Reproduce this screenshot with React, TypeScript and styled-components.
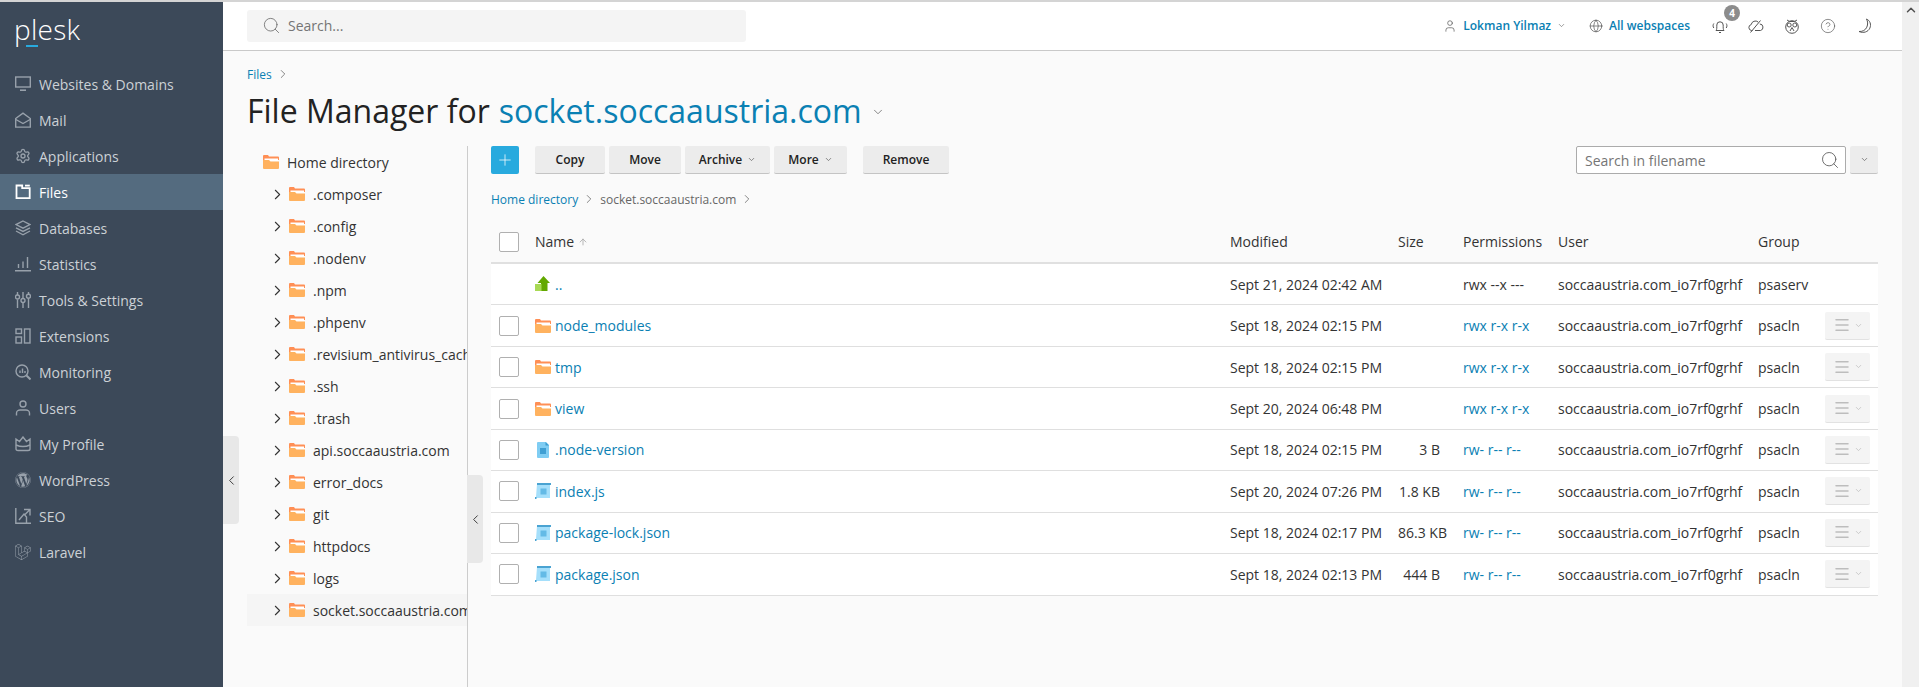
import * as React from 'react';
import styled, { createGlobalStyle } from 'styled-components';
import {
    ArrowUp, ChevronDown, ChevronLeft, ChevronRight, ChevronUp, CircleHelp, Globe, Menu,
    Plus, Search, Settings, User
} from 'lucide-react';
import { FaWordpress } from 'react-icons/fa';
import { SiLaravel } from 'react-icons/si';

const LINK = '#0a80b3';
const TEXT = '#222222';

const GlobalStyle = createGlobalStyle`
    html, body { margin: 0; padding: 0; height: 100%; overflow: hidden; }
    body { font-family: "Open Sans", "Noto Sans", sans-serif; font-size: 14px; color: ${TEXT}; }
    * { box-sizing: border-box; }
`;

const ICON_PROPS = { width: 16, height: 16, viewBox: '0 0 16 16', fill: 'none', stroke: 'currentColor', strokeWidth: 1.4 };

const navItems: { label: string; icon: React.ReactNode; active?: boolean }[] = [
    { label: 'Websites & Domains', icon: <svg {...ICON_PROPS}><rect x="0.7" y="1" width="14.6" height="10" /><path d="M5 14.2h6" strokeWidth="1.6" /></svg> },
    { label: 'Mail', icon: <svg {...ICON_PROPS}><path d="M.7 6.5 8 1.2l7.3 5.3v8.6H.7z" /><path d="m.9 7.5 7.1 4 7.1-4" /></svg> },
    { label: 'Applications', icon: <Settings size={16} strokeWidth={2} /> },
    { label: 'Files', active: true, icon: <svg {...ICON_PROPS} strokeWidth={1.8}><path d="M1.5 1.5v12.6h13.2V4.2H7.2V1.5z" /><path d="M10 1.6h4.8" /></svg> },
    { label: 'Databases', icon: <svg {...ICON_PROPS}><path d="M8 1 15 4.6 8 8.2 1 4.6z" /><path d="m1 7.8 7 3.6 7-3.6M1 11l7 3.8 7-3.8" /></svg> },
    { label: 'Statistics', icon: <svg {...ICON_PROPS}><path d="M0 14.8h16M3.5 12V8M8 12V5.5M12.5 12V1" /></svg> },
    { label: 'Tools & Settings', icon: <svg {...ICON_PROPS}><path d="M2.5 0v3M2.5 7.5V16M8 0v6M8 11v5M13.5 0v2M13.5 6.5V16" /><circle cx="2.5" cy="5" r="2" /><circle cx="8" cy="8.5" r="2" /><circle cx="13.5" cy="4.2" r="2" /></svg> },
    { label: 'Extensions', icon: <svg {...ICON_PROPS}><rect x="1" y="1" width="5.5" height="4.5" /><rect x="1" y="9" width="5.5" height="6" /><rect x="9.5" y="1" width="5.5" height="14" /></svg> },
    { label: 'Monitoring', icon: <svg {...ICON_PROPS}><circle cx="7" cy="7" r="6" /><path d="m11.5 11.5 4 4" strokeWidth="2" /><path d="M5 9V6.5M7.5 9V4.5M10 9V7" /></svg> },
    { label: 'Users', icon: <svg {...ICON_PROPS}><circle cx="8" cy="4" r="3" /><path d="M1.5 15.5V13c0-2 2-3 3.5-3h6c1.5 0 3.500 1 3.500 3v2.500" /></svg> },
    { label: 'My Profile', icon: <svg {...ICON_PROPS}><path d="m1 3 3.500 2.500L8 1l3.500 4.500L15 3v10c0 1-1 1.500-2 1.500H3c-1 0-2-.5-2-1.500z" /><path d="M1 9c4 1.800 10 1.800 14 0" /></svg> },
    { label: 'WordPress', icon: <FaWordpress size={16} /> },
    { label: 'SEO', icon: <svg {...ICON_PROPS}><path d="M.8 0v15.200H16" /><path d="m4 12 5-6 2.500 3V15M9 1.500h6v6M15 1.500 9.500 7" /></svg> },
    { label: 'Laravel', icon: <SiLaravel size={16} /> }
];

const treeItems = [
    '.composer', '.config', '.nodenv', '.npm', '.phpenv', '.revisium_antivirus_cache', '.ssh', '.trash',
    'api.soccaaustria.com', 'error_docs', 'git', 'httpdocs', 'logs', 'socket.soccaaustria.com'
];

type FileKind = 'up' | 'folder' | 'file' | 'script';

interface FileRow {
    name: string;
    kind: FileKind;
    modified: string;
    size?: string;
    permissions: string;
}

const fileRows: FileRow[] = [
    { name: '..', kind: 'up', modified: 'Sept 21, 2024 02:42 AM', permissions: 'rwx --x ---' },
    { name: 'node_modules', kind: 'folder', modified: 'Sept 18, 2024 02:15 PM', permissions: 'rwx r-x r-x' },
    { name: 'tmp', kind: 'folder', modified: 'Sept 18, 2024 02:15 PM', permissions: 'rwx r-x r-x' },
    { name: 'view', kind: 'folder', modified: 'Sept 20, 2024 06:48 PM', permissions: 'rwx r-x r-x' },
    { name: '.node-version', kind: 'file', modified: 'Sept 18, 2024 02:15 PM', size: '3 B', permissions: 'rw- r-- r--' },
    { name: 'index.js', kind: 'script', modified: 'Sept 20, 2024 07:26 PM', size: '1.8 KB', permissions: 'rw- r-- r--' },
    { name: 'package-lock.json', kind: 'script', modified: 'Sept 18, 2024 02:17 PM', size: '86.3 KB', permissions: 'rw- r-- r--' },
    { name: 'package.json', kind: 'script', modified: 'Sept 18, 2024 02:13 PM', size: '444 B', permissions: 'rw- r-- r--' }
];

const FolderIcon = () => (
    <svg width="16" height="14" viewBox="0 0 16 14">
        <path d="M0 1a1 1 0 0 1 1-1h4l1 1.500h9a1 1 0 0 1 1 1V5H0z" fill="#ff8f55" />
        <path d="M1.500 3.500H15V6H1.500z" fill="#fff" />
        <path d="M0 5h6l1.500 1.500H16V13a1 1 0 0 1-1 1H1a1 1 0 0 1-1-1z" fill="#ffb25f" />
    </svg>
);

const KindIcon = ({ kind }: { kind: FileKind }) => {
    if (kind === 'folder') return <FolderIcon />;
    if (kind === 'up') {
        return (
            <svg width="16" height="16" viewBox="0 0 16 16">
                <path d="M8.500 0 15 7h-2.500v8H6V7H2.500z" fill="#62a800" />
                <path d="M0 8h6.500v7H0z" fill="#a8d955" />
            </svg>
        );
    }
    if (kind === 'file') {
        return (
            <svg width="16" height="16" viewBox="0 0 16 16">
                <path d="M3 0h8l3 3v12a1 1 0 0 1-1 1H3a1 1 0 0 1-1-1V1a1 1 0 0 1 1-1z" fill="#7fcdf3" />
                <path d="M10.500 0 14 3.500h-3.500z" fill="#3d9dd0" />
                <rect x="5" y="6" width="6" height="6" fill="#3f9fd3" />
            </svg>
        );
    }
    return (
        <svg width="16" height="16" viewBox="0 0 16 16">
            <path d="M2 1h13v14H0v-1h1z" fill="#a5dffb" />
            <rect x="2" y="0" width="14" height="2" fill="#4aa3d2" />
            <rect x="0" y="14" width="1.500" height="2" fill="#4aa3d2" />
            <rect x="5.500" y="5.500" width="6" height="6" fill="#64bae6" />
        </svg>
    );
};

const Page = styled.div`
    display: flex;
    height: 100vh;
    border-top: 2px solid #d4d4d4;
    overflow: hidden;
`;

const Sidebar = styled.nav`
    flex: 0 0 223px;
    background: #3c4959;
`;

const LogoRow = styled.div`
    height: 64px;
    padding: 10px 0 0 14px;
`;

const Logo = styled.span`
    position: relative;
    display: inline-block;
    font-size: 28px;
    line-height: 34px;
    font-weight: 300;
    letter-spacing: 0.3px;
    color: #ffffff;

    &::after {
        content: '';
        position: absolute;
        left: 12px;
        top: 33px;
        width: 12px;
        height: 2px;
        background: #28aade;
    }
`;

const NavItem = styled.a<{ $active?: boolean }>`
    display: flex;
    align-items: center;
    gap: 8px;
    height: 36px;
    padding-left: 15px;
    font-size: 14px;
    background: ${(props) => (props.$active ? '#546b7f' : 'transparent')};
    color: ${(props) => (props.$active ? '#ffffff' : '#ccd1d6')};

    svg {
        flex: none;
        color: ${(props) => (props.$active ? '#ffffff' : '#98a1ab')};
    }
`;

const Main = styled.div`
    position: relative;
    flex: 1;
    min-width: 0;
    display: flex;
    flex-direction: column;
    background: #fafafa;
`;

const Header = styled.header`
    flex: 0 0 49px;
    display: flex;
    align-items: center;
    padding: 0 29px 1px 24px;
    background: #ffffff;
    border-bottom: 1px solid #c9c9c9;
`;

const GlobalSearch = styled.div`
    display: flex;
    align-items: center;
    gap: 7px;
    width: 499px;
    height: 32px;
    padding-left: 15px;
    border-radius: 3px;
    background: #f4f4f4;
    color: #757575;

    svg {
        color: #666;
    }
`;

const HeaderRight = styled.div`
    margin-left: auto;
    display: flex;
    align-items: center;
    height: 100%;
`;

const HeaderLink = styled.a<{ $gap: number }>`
    display: flex;
    align-items: center;
    gap: 6px;
    margin-right: ${(props) => props.$gap}px;
    font-size: 12px;
    font-weight: 600;
    color: ${LINK};

    svg {
        color: #555;
    }
`;

const HeaderIcon = styled.span<{ $gap: number }>`
    position: relative;
    display: flex;
    margin-right: ${(props) => props.$gap}px;
    color: #555;
`;

const Badge = styled.span`
    position: absolute;
    left: 12px;
    top: -13px;
    width: 16px;
    height: 16px;
    border-radius: 50%;
    background: #8c8c8c;
    color: #fff;
    font-size: 10px;
    font-weight: 700;
    line-height: 16px;
    text-align: center;
`;

const Content = styled.main`
    flex: 1;
    min-height: 0;
    display: flex;
    flex-direction: column;
    padding-left: 24px;
`;

const Crumbs = styled.div`
    display: flex;
    align-items: center;
    gap: 4px;
    height: 18px;
    margin-top: 14px;
    font-size: 12px;
    color: ${LINK};

    svg {
        color: #555;
    }
`;

const Title = styled.h1`
    display: flex;
    align-items: center;
    height: 44px;
    margin: 5px 0 14px;
    font-size: 32px;
    font-weight: 400;
    white-space: nowrap;
    color: ${TEXT};

    a {
        color: ${LINK};
        margin-left: 9px;
    }

    svg {
        margin: 4px 0 0 9px;
        color: #555;
    }
`;

const Split = styled.div`
    flex: 1;
    min-height: 0;
    display: flex;
`;

const Tree = styled.aside`
    position: relative;
    flex: 0 0 221px;
    min-width: 0;
    border-right: 1px solid #cccccc;
`;

const TreeRow = styled.div<{ $root?: boolean; $selected?: boolean }>`
    display: flex;
    align-items: center;
    height: 32px;
    padding-left: ${(props) => (props.$root ? '16px' : '22px')};
    background: ${(props) => (props.$selected ? '#f5f5f5' : 'transparent')};
    white-space: nowrap;
    overflow: hidden;
    color: #333;

    > svg:first-child {
        flex: none;
        color: #333;
    }
`;

const TreeFolder = styled.span<{ $root?: boolean }>`
    flex: none;
    display: flex;
    margin: ${(props) => (props.$root ? '0 8px 0 0' : '0 8px 0 3px')};
`;

const CollapseHandle = styled.button<{ $top: number; $left: string }>`
    position: absolute;
    left: ${(props) => props.$left};
    top: ${(props) => props.$top}px;
    display: flex;
    align-items: center;
    justify-content: center;
    width: 16px;
    height: 88px;
    padding: 0;
    border: 0;
    border-radius: 0 4px 4px 0;
    background: #e8e8e8;
    color: #333;
`;

const Pane = styled.section`
    flex: 1;
    min-width: 0;
    padding: 0 24px 0 23px;
`;

const Toolbar = styled.div`
    display: flex;
    align-items: flex-start;
    height: 28px;
`;

const AddButton = styled.button`
    display: flex;
    align-items: center;
    justify-content: center;
    width: 28px;
    height: 28px;
    margin-right: 16px;
    padding: 0;
    border: 0;
    border-radius: 2px;
    background: #28aade;
    color: #fff;
`;

const ToolButton = styled.button<{ $width: number; $gap?: number }>`
    display: flex;
    align-items: center;
    justify-content: center;
    gap: 5px;
    width: ${(props) => props.$width}px;
    height: 28px;
    margin-right: ${(props) => props.$gap ?? 4}px;
    padding: 0;
    border: 0;
    border-bottom: 1px solid #c4c4c4;
    border-radius: 2px;
    background: #ececec;
    font-family: inherit;
    font-size: 12px;
    font-weight: 600;
    color: #222;

    svg {
        color: #666;
    }
`;

const FilterBox = styled.div`
    display: flex;
    align-items: center;
    justify-content: space-between;
    width: 270px;
    height: 28px;
    margin-left: auto;
    padding: 0 5px 0 8px;
    border: 1px solid #ababab;
    border-radius: 2px;
    background: #fff;
    color: #757575;

    svg {
        color: #555;
    }
`;

const FilterToggle = styled(ToolButton)`
    margin: 0 0 0 4px;
`;

const PathBar = styled.div`
    display: flex;
    align-items: center;
    gap: 4px;
    height: 18px;
    margin: 16px 0 13px;
    font-size: 12px;
    color: #666;

    a {
        color: ${LINK};
    }

    svg {
        color: #555;
    }
`;

const COLUMNS = '44px 695px 168px 65px 95px 200px 67px 53px';

const HeadRow = styled.div`
    display: grid;
    grid-template-columns: ${COLUMNS};
    align-items: center;
    height: 43px;
    border-bottom: 2px solid #e0e0e0;
    color: #333;
`;

const BodyRow = styled.div`
    display: grid;
    grid-template-columns: ${COLUMNS};
    align-items: center;
    height: 41.45px;
    background: #fff;
    border-bottom: 1px solid #dfdfdf;
    color: #333;
`;

const CheckCell = styled.span`
    padding-left: 8px;
    display: flex;
`;

const Checkbox = styled.span`
    width: 20px;
    height: 20px;
    border: 1px solid #b0b0b0;
    border-radius: 2px;
    background: #fff;
`;

const NameCell = styled.span`
    display: flex;
    align-items: center;
    gap: 4px;
    color: ${LINK};
`;

const NameIcon = styled.span`
    display: flex;
    justify-content: center;
    width: 16px;
`;

const HeadName = styled.span`
    display: flex;
    align-items: center;
    gap: 4px;

    svg {
        color: #a8a8a8;
    }
`;

const SizeCell = styled.span`
    padding-right: 23px;
    text-align: right;
    white-space: nowrap;
`;

const Perms = styled.span<{ $link: boolean }>`
    white-space: nowrap;
    color: ${(props) => (props.$link ? LINK : '#333')};
`;

const RowAction = styled.button`
    display: flex;
    align-items: center;
    justify-content: center;
    gap: 3px;
    width: 45px;
    height: 28px;
    padding: 0;
    border: 0;
    border-bottom: 1px solid #e2e2e2;
    border-radius: 2px;
    background: #f4f4f4;
    color: #bdbdbd;
`;

const ScrollTrack = styled.div`
    flex: 0 0 17px;
    display: flex;
    justify-content: center;
    padding-top: 1px;
    background: #f0f0f0;
    color: #505050;
`;

export default function App() {
    return (
        <React.Fragment>
            <GlobalStyle />
            <Page>
                <Sidebar>
                    <LogoRow><Logo>plesk</Logo></LogoRow>
                    {navItems.map((item) => (
                        <NavItem key={item.label} $active={item.active}>
                            {item.icon}
                            {item.label}
                        </NavItem>
                    ))}
                </Sidebar>
                <Main>
                    <Header>
                        <GlobalSearch>
                            <Search size={19} strokeWidth={1} />
                            Search...
                        </GlobalSearch>
                        <HeaderRight>
                            <HeaderLink $gap={23}>
                                <User size={14} strokeWidth={1.2} />
                                Lokman Yilmaz
                                <ChevronDown size={9} strokeWidth={1.5} />
                            </HeaderLink>
                            <HeaderLink $gap={22}>
                                <Globe size={14} strokeWidth={1.2} />
                                All webspaces
                            </HeaderLink>
                            <HeaderIcon $gap={20}>
                                <svg width="16" height="16" viewBox="0 0 16 16" fill="none" stroke="currentColor" strokeWidth="1">
                                    <path d="M4 12.500c1-1 .8-3 .8-5.500a3.200 3.200 0 0 1 6.400 0c0 2.500-.2 4.500 .8 5.500zM7 14.500h2M1.800 5.500c-1 1.500-1 3 0 4.500M14.200 5.500c1 1.500 1 3 0 4.500" />
                                </svg>
                                <Badge>4</Badge>
                            </HeaderIcon>
                            <HeaderIcon $gap={20}>
                                <svg width="16" height="16" viewBox="0 0 16 16" fill="none" stroke="currentColor" strokeWidth="1">
                                    <path d="M4.500 12.500H3.500a3 3 0 0 1-.3-5.900 4.300 4.300 0 0 1 7-2.600M11.800 6a3.300 3.300 0 0 1 .7 6.500H7" />
                                    <path d="M2.500 14.500 12.500 2.500" />
                                </svg>
                            </HeaderIcon>
                            <HeaderIcon $gap={20}>
                                <svg width="16" height="16" viewBox="0 0 16 16" fill="none" stroke="currentColor" strokeWidth="1">
                                    <circle cx="8" cy="9" r="6.300" />
                                    <circle cx="5.200" cy="7" r="2" />
                                    <circle cx="10.800" cy="7" r="2" />
                                    <path d="m3 2 2.500 1.500h5L13 2M8 9.500 6 13M8 9.500l2 3.500" />
                                </svg>
                            </HeaderIcon>
                            <HeaderIcon $gap={21}><CircleHelp size={16} strokeWidth={1} /></HeaderIcon>
                            <HeaderIcon $gap={0}>
                                <svg width="16" height="16" viewBox="0 0 16 16" fill="none" stroke="currentColor" strokeWidth="1">
                                    <path d="M9.500 1c3.500 1.500 5 5.500 3.300 9.200S6.500 15.500 2 13.500c3.500 .2 6.500-1.300 7.800-4.300S10.800 3.500 9.500 1z" />
                                </svg>
                            </HeaderIcon>
                        </HeaderRight>
                    </Header>
                    <Content>
                        <Crumbs>Files <ChevronRight size={14} strokeWidth={1.2} /></Crumbs>
                        <Title>
                            File Manager for <a>socket.soccaaustria.com</a>
                            <ChevronDown size={14} strokeWidth={1.2} />
                        </Title>
                        <Split>
                            <Tree>
                                <TreeRow $root>
                                    <TreeFolder $root><FolderIcon /></TreeFolder>
                                    Home directory
                                </TreeRow>
                                {treeItems.map((name, index) => (
                                    <TreeRow key={name} $selected={index === treeItems.length - 1}>
                                        <ChevronRight size={17} strokeWidth={1.5} />
                                        <TreeFolder><FolderIcon /></TreeFolder>
                                        {name}
                                    </TreeRow>
                                ))}
                                <CollapseHandle $top={329} $left="100%"><ChevronLeft size={15} strokeWidth={1.5} /></CollapseHandle>
                            </Tree>
                            <Pane>
                                <Toolbar>
                                    <AddButton><Plus size={18} strokeWidth={1} /></AddButton>
                                    <ToolButton $width={70}>Copy</ToolButton>
                                    <ToolButton $width={72}>Move</ToolButton>
                                    <ToolButton $width={85}>Archive <ChevronDown size={9} /></ToolButton>
                                    <ToolButton $width={73} $gap={16}>More <ChevronDown size={9} /></ToolButton>
                                    <ToolButton $width={86}>Remove</ToolButton>
                                    <FilterBox>
                                        Search in filename
                                        <Search size={20} strokeWidth={1} />
                                    </FilterBox>
                                    <FilterToggle $width={28}><ChevronDown size={9} /></FilterToggle>
                                </Toolbar>
                                <PathBar>
                                    <a>Home directory</a>
                                    <ChevronRight size={14} strokeWidth={1.2} />
                                    socket.soccaaustria.com
                                    <ChevronRight size={14} strokeWidth={1.2} />
                                </PathBar>
                                <HeadRow>
                                    <CheckCell><Checkbox /></CheckCell>
                                    <HeadName>Name <ArrowUp size={10} strokeWidth={2} /></HeadName>
                                    <span>Modified</span>
                                    <span>Size</span>
                                    <span>Permissions</span>
                                    <span>User</span>
                                    <span>Group</span>
                                    <span />
                                </HeadRow>
                                {fileRows.map((row) => {
                                    const isUp = row.kind === 'up';
                                    return (
                                        <BodyRow key={row.name}>
                                            <CheckCell>{isUp ? null : <Checkbox />}</CheckCell>
                                            <NameCell>
                                                <NameIcon><KindIcon kind={row.kind} /></NameIcon>
                                                {row.name}
                                            </NameCell>
                                            <span>{row.modified}</span>
                                            <SizeCell>{row.size}</SizeCell>
                                            <Perms $link={!isUp}>{row.permissions}</Perms>
                                            <span>soccaaustria.com_io7rf0grhf</span>
                                            <span>{isUp ? 'psaserv' : 'psacln'}</span>
                                            {isUp ? <span /> : (
                                                <RowAction>
                                                    <Menu size={18} strokeWidth={2} />
                                                    <ChevronDown size={9} />
                                                </RowAction>
                                            )}
                                        </BodyRow>
                                    );
                                })}
                            </Pane>
                        </Split>
                        <CollapseHandle $top={434} $left="0"><ChevronLeft size={15} strokeWidth={1.5} /></CollapseHandle>
                    </Content>
                </Main>
                <ScrollTrack><ChevronUp size={14} strokeWidth={2.5} /></ScrollTrack>
            </Page>
        </React.Fragment>
    );
}
